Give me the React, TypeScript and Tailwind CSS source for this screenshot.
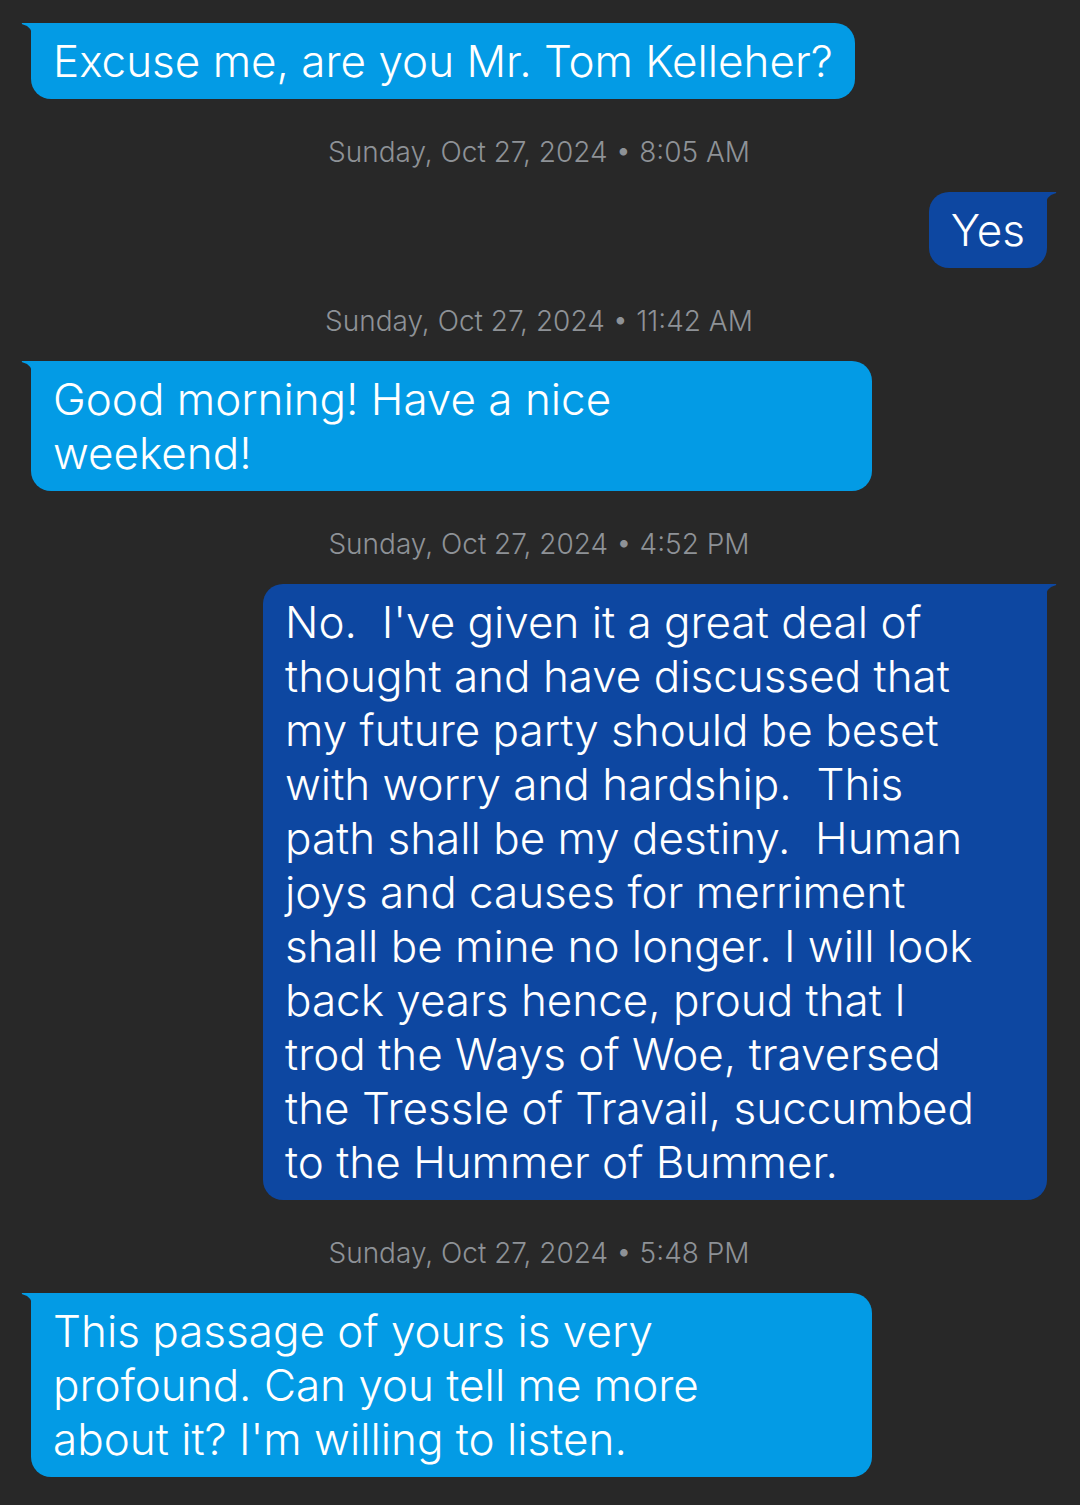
import React from "react";

type Msg =
  | { kind: "stamp"; text: string }
  | { kind: "in" | "out"; lines: string[]; width?: string };

const thread: Msg[] = [
  { kind: "in", lines: ["Excuse me, are you Mr. Tom Kelleher?"] },
  { kind: "stamp", text: "Sunday, Oct 27, 2024 • 8:05 AM" },
  { kind: "out", lines: ["Yes"] },
  { kind: "stamp", text: "Sunday, Oct 27, 2024 • 11:42 AM" },
  { kind: "in", lines: ["Good morning! Have a nice", "weekend!"], width: "w-[841px]" },
  { kind: "stamp", text: "Sunday, Oct 27, 2024 • 4:52 PM" },
  {
    kind: "out",
    width: "w-[784px]",
    lines: [
      "No.  I've given it a great deal of",
      "thought and have discussed that",
      "my future party should be beset",
      "with worry and hardship.  This",
      "path shall be my destiny.  Human",
      "joys and causes for merriment",
      "shall be mine no longer. I will look",
      "back years hence, proud that I",
      "trod the Ways of Woe, traversed",
      "the Tressle of Travail, succumbed",
      "to the Hummer of Bummer.",
    ],
  },
  { kind: "stamp", text: "Sunday, Oct 27, 2024 • 5:48 PM" },
  {
    kind: "in",
    width: "w-[841px]",
    lines: [
      "This passage of yours is very",
      "profound. Can you tell me more",
      "about it? I'm willing to listen.",
    ],
  },
];

function Tail({ side, color }: { side: "left" | "right"; color: string }) {
  // little flared corner at the top of each bubble
  if (side === "left") {
    return (
      <svg
        width="12"
        height="16"
        viewBox="0 0 12 16"
        className="absolute top-0 -left-[10px]"
      >
        <path d="M1 0 H12 V16 Q11 3 2 1.6 Q0 1 1 0 Z" fill={color} />
      </svg>
    );
  }
  return (
    <svg
      width="12"
      height="16"
      viewBox="0 0 12 16"
      className="absolute top-0 -right-[10px]"
    >
      <path d="M11 0 H0 V16 Q1 3 10 1.6 Q12 1 11 0 Z" fill={color} />
    </svg>
  );
}

function Bubble({ msg }: { msg: Extract<Msg, { lines: string[] }> }) {
  const incoming = msg.kind === "in";
  const color = incoming ? "#039be5" : "#0d47a1";
  return (
    <div className={incoming ? "flex justify-start" : "flex justify-end"}>
      <div
        className={`relative rounded-[20px] px-[22px] py-[11px] text-white text-[44px] font-light leading-[54px] ${
          incoming ? "rounded-tl-none bg-[#039be5]" : "rounded-tr-none bg-[#0d47a1]"
        } ${msg.width ?? ""}`}
      >
        <Tail side={incoming ? "left" : "right"} color={color} />
        {msg.lines.map((line, i) => (
          <span key={i} className="block whitespace-pre">
            {line}
          </span>
        ))}
      </div>
    </div>
  );
}

export default function App() {
  return (
    <div
      className="min-h-[1505px] bg-[#282828] pt-[23px] pl-[31px] pr-[33px] pb-8"
      style={{ fontFamily: "Inter, 'Noto Sans', sans-serif" }}
    >
      {thread.map((m, i) =>
        m.kind === "stamp" ? (
          <div
            key={i}
            className="mt-[35px] mb-[22px] text-center text-[28px] font-light leading-[36px] text-[#8e9297]"
          >
            {m.text}
          </div>
        ) : (
          <Bubble key={i} msg={m} />
        )
      )}
    </div>
  );
}
